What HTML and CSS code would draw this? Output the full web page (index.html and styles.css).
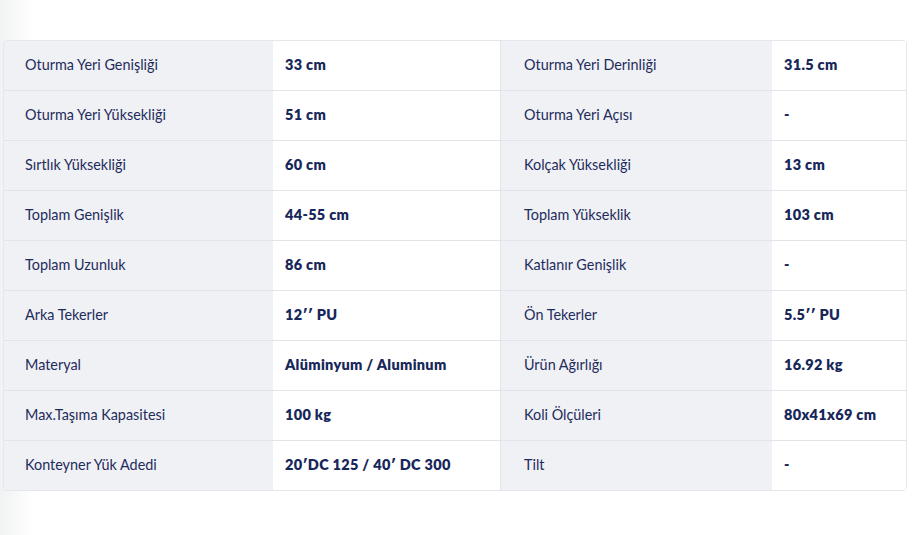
FILE: index.html
```html
<!DOCTYPE html>
<html lang="tr">
<head>
<meta charset="utf-8">
<title>Teknik Özellikler</title>
<link rel="stylesheet" href="styles.css">
</head>
<body>
<div class="shade"></div>
<div class="specs">
  <div class="row">
    <div class="cell label">Oturma Yeri Genişliği</div>
    <div class="cell value">33 cm</div>
    <div class="cell label label2">Oturma Yeri Derinliği</div>
    <div class="cell value">31.5 cm</div>
  </div>
  <div class="row">
    <div class="cell label">Oturma Yeri Yüksekliği</div>
    <div class="cell value">51 cm</div>
    <div class="cell label label2">Oturma Yeri Açısı</div>
    <div class="cell value">-</div>
  </div>
  <div class="row">
    <div class="cell label">Sırtlık Yüksekliği</div>
    <div class="cell value">60 cm</div>
    <div class="cell label label2">Kolçak Yüksekliği</div>
    <div class="cell value">13 cm</div>
  </div>
  <div class="row">
    <div class="cell label">Toplam Genişlik</div>
    <div class="cell value">44-55 cm</div>
    <div class="cell label label2">Toplam Yükseklik</div>
    <div class="cell value">103 cm</div>
  </div>
  <div class="row">
    <div class="cell label">Toplam Uzunluk</div>
    <div class="cell value">86 cm</div>
    <div class="cell label label2">Katlanır Genişlik</div>
    <div class="cell value">-</div>
  </div>
  <div class="row">
    <div class="cell label">Arka Tekerler</div>
    <div class="cell value">12′′ PU</div>
    <div class="cell label label2">Ön Tekerler</div>
    <div class="cell value">5.5′′ PU</div>
  </div>
  <div class="row">
    <div class="cell label">Materyal</div>
    <div class="cell value">Alüminyum / Aluminum</div>
    <div class="cell label label2">Ürün Ağırlığı</div>
    <div class="cell value">16.92 kg</div>
  </div>
  <div class="row">
    <div class="cell label">Max.Taşıma Kapasitesi</div>
    <div class="cell value">100 kg</div>
    <div class="cell label label2">Koli Ölçüleri</div>
    <div class="cell value">80x41x69 cm</div>
  </div>
  <div class="row">
    <div class="cell label">Konteyner Yük Adedi</div>
    <div class="cell value">20′DC 125 / 40′ DC 300</div>
    <div class="cell label label2">Tilt</div>
    <div class="cell value">-</div>
  </div>
</div>
</body>
</html>
```
FILE: styles.css
```css
html, body {
  margin: 0;
  padding: 0;
  background: #ffffff;
}
body {
  font-family: Lato, "Liberation Sans", sans-serif;
  color: #1c2a5a;
  padding: 40px 0 0 3px;
  position: relative;
  min-height: 535px;
  box-sizing: border-box;
}
.shade {
  position: absolute;
  left: 0;
  top: 0;
  bottom: 0;
  width: 34px;
  background: linear-gradient(to right, #f1f2f3, rgba(255,255,255,0));
  z-index: 0;
}
.specs {
  position: relative;
  z-index: 1;
  width: 904px;
  border: 1px solid #e6e7ed;
  border-radius: 4px;
  overflow: hidden;
  box-sizing: border-box;
  background: #fff;
}
.row {
  display: grid;
  grid-template-columns: 269px 227px 272px 1fr;
  height: 50px;
  border-top: 1px solid #e3e4ea;
  box-sizing: border-box;
}
.row:first-child {
  border-top: none;
  height: 49px;
}
.cell {
  display: flex;
  align-items: center;
  font-size: 14px;
  padding-bottom: 2px;
}
.label {
  background: #f0f1f5;
  padding-left: 21px;
  color: #1e2c5c;
  font-size: 14.4px;
}
.label2 {
  border-left: 1px solid #e3e4ea;
  padding-left: 23px;
}
.value {
  background: #fff;
  padding-left: 12px;
  font-weight: 800;
  color: #17275a;
  font-size: 14.5px;
  letter-spacing: 0.3px;
}
```
